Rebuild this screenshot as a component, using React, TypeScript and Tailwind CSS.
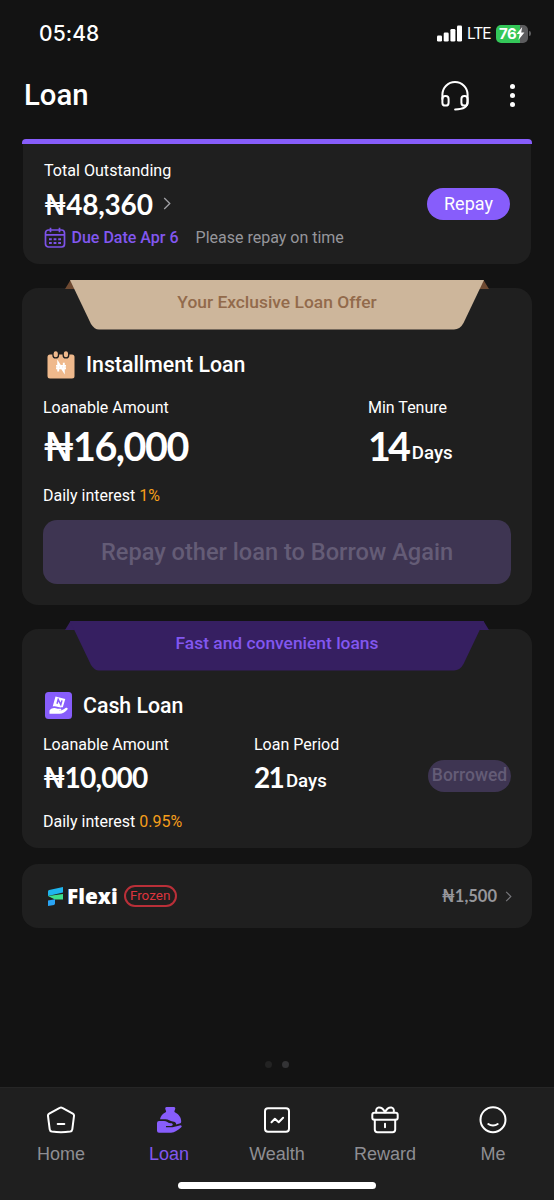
import type { ReactNode } from 'react';
import clsx from 'clsx';

function Chevron({ className }: { className?: string }) {
  return (
    <svg viewBox="0 0 8 14" fill="none" stroke="currentColor" strokeWidth="1.4" className={className}>
      <path d="M1 1l6 6-6 6" />
    </svg>
  );
}

function StatusBar() {
  return (
    <div className="flex h-[67px] items-center justify-between pl-[39px] pr-[23px]">
      <span className="font-['Inter'] text-[21px] font-medium leading-none tracking-[0.1px]">05:48</span>
      <div className="flex items-center">
        <svg viewBox="0 0 26 17" className="h-[17px] w-[26px]" fill="#fff">
          <rect x="0" y="10.5" width="5" height="6" rx="1.3" />
          <rect x="6.7" y="7.5" width="5" height="9" rx="1.3" />
          <rect x="13.4" y="4" width="5" height="12.5" rx="1.3" />
          <rect x="20" y="0.5" width="5" height="16" rx="1.3" />
        </svg>
        <span className="ml-1 w-[25px] font-['Inter'] text-[15.5px] leading-none tracking-[-1px]">LTE</span>
        <div className="relative ml-[4px] flex h-[18px] w-[32px] items-center overflow-hidden rounded-[5px] bg-gradient-to-r from-[#34c759] from-75% to-[#5c5c5e] to-75%">
          <span className="pl-[3px] font-['Inter'] text-[15px] font-bold leading-none tracking-[-0.6px]">76</span>
          <svg viewBox="0 0 9 13" className="h-[13px] w-[9px]" fill="#fff">
            <path d="M6.2 0L0.6 7h3.1L2.4 13 8.4 5.6H5.2z" />
          </svg>
        </div>
        <div className="ml-[1px] h-[5px] w-[2px] rounded-r-full bg-[#5c5c5e]" />
      </div>
    </div>
  );
}

function Header() {
  return (
    <header className="flex h-[57px] items-center justify-between pl-[24px] pr-[39px]">
      <h1 className="text-[29.3px] font-medium leading-none">Loan</h1>
      <div className="flex items-center">
        <svg viewBox="0 0 30 32" className="mr-[40px] h-[32px] w-[30px]" fill="none" stroke="#fff" strokeWidth="2" strokeLinecap="round">
          <path d="M2.4 19v-4.4a12.6 12.6 0 0125.2 0v7c0 5-4.500 7.900-12.500 7.900" />
          <rect x="2.400" y="16" width="6.200" height="9.600" rx="2.900" />
          <rect x="21.400" y="16" width="6.200" height="9.600" rx="2.900" />
        </svg>
        <div className="flex flex-col items-center gap-[4px]">
          <i className="size-[5px] rounded-full bg-white" />
          <i className="size-[5px] rounded-full bg-white" />
          <i className="size-[5px] rounded-full bg-white" />
        </div>
      </div>
    </header>
  );
}

function CalendarIcon() {
  return (
    <svg viewBox="0 0 22 22" className="size-[22px]" fill="none" stroke="#7c52e8" strokeWidth="1.7">
      <rect x="1.5" y="3" width="19" height="17" rx="3" />
      <path d="M1.5 7.800h19M6.500 0.800v4.400M15.500 0.800v4.400" />
      <path d="M5 12.200h2.800M9.600 12.200h2.800M14.200 12.200H17M5 16.100h2.800M9.600 16.100h2.800M14.200 16.100H17" strokeWidth="2" />
    </svg>
  );
}

function OutstandingCard() {
  return (
    <section className="mx-[22px] mt-[15px]">
      <div className="h-[5px] rounded-t-[4px] bg-[#875dfb]" />
      <div className="mx-[1px] flex h-[120px] items-center justify-between rounded-b-[16px] bg-[#1f1f1f] pl-[21px] pr-[21px]">
        <div>
          <p className="h-[32px] text-[16.1px] leading-[34px]">Total Outstanding</p>
          <p className="flex h-[36px] items-center pb-[1px] font-['Lato'] text-[28px] font-bold leading-none tracking-[-0.2px]">
            ₦48,360
            <Chevron className="ml-[10px] h-[13px] w-[8px] text-[#a0a0a4]" />
          </p>
          <p className="flex h-[32px] items-center text-[16px]">
            <CalendarIcon />
            <span className="ml-[5.5px] font-medium text-[#8257f0]">Due Date Apr 6</span>
            <span className="ml-[17px] text-[#96969b]">Please repay on time</span>
          </p>
        </div>
        <button className="h-[32px] w-[83px] rounded-full bg-[#875dfb] text-[18px] leading-none">Repay</button>
      </div>
    </section>
  );
}

function Ribbon({ fill, fold, textClass, children }: { fill: string; fold: string; textClass: string; children: ReactNode }) {
  return (
    <div className="relative -mt-2 flex h-[50px] items-center justify-center">
      <svg viewBox="0 0 424 50" className="absolute top-0 left-[43px] h-[50px] w-[424px]">
        <path d="M5.500 0L0 9h12V0zM418.500 0l5.500 9h-12V0z" fill={fold} />
        <path d="M5 0H419L398.500 43Q395 49.500 389 49.500H34Q29.500 49.500 26 44z" fill={fill} />
      </svg>
      <span className={clsx('relative -top-[2px] text-[17.4px] font-medium leading-none', textClass)}>{children}</span>
    </div>
  );
}

function InstallmentIcon() {
  return (
    <svg viewBox="0 0 28 29" className="mb-[1px] h-[29px] w-[28px]">
      <rect x="0.500" y="4.500" width="27" height="24" rx="2.500" fill="#efb98c" />
      <rect x="6" y="0.700" width="5.500" height="7.200" rx="2.700" fill="#efb98c" stroke="#1f1f1f" strokeWidth="1.300" />
      <rect x="16.200" y="0.700" width="5.500" height="7.200" rx="2.700" fill="#efb98c" stroke="#1f1f1f" strokeWidth="1.300" />
      <path d="M11.200 21.400v-8.600l5.600 8.600v-8.600M9 15.900h10M9 18.300h10" fill="none" stroke="#fff" strokeWidth="1.900" />
    </svg>
  );
}

function CashIcon() {
  return (
    <svg viewBox="0 0 27 27" className="size-[27px]">
      <rect width="27" height="27" rx="3.500" fill="#875dfb" />
      <path d="M10.500 4.500l9.800 2.500-2.500 8.200c-1.500 0-2 .4-3.500.1-2-.4-3-1.600-6.600-.9z" fill="#fff" />
      <path d="M12 11.800l1.200-4.200 2.600 5 1.200-4.200" fill="none" stroke="#875dfb" strokeWidth="1.500" />
      <path d="M4.500 18.500c2.500-3.200 5.500-2.900 8-1.700h3c1.100 0 1.200 1.500 0 1.700h-2.300c2.500.6 5.200-.8 7.300-2.500 1.600-1 3 .3 1.700 1.700-2.400 2.500-4.700 4-7.400 4H4.500z" fill="#fff" />
    </svg>
  );
}

function InstallmentCard() {
  return (
    <section className="mx-[22px] mt-[24px] h-[317px] rounded-[16px] bg-[#1f1f1f]">
      <Ribbon fill="#cdb69b" fold="#6d4931" textClass="text-[#926a4b]">Your Exclusive Loan Offer</Ribbon>
      <div className="px-[21px]">
        <div className="mt-[17px] flex h-[35px] items-center gap-[11px] pl-[4px]">
          <InstallmentIcon />
          <h2 className="text-[21.3px] font-medium leading-none">Installment Loan</h2>
        </div>
        <div className="mt-[15px] flex">
          <div className="w-[325px]">
            <p className="text-[16px] leading-[22px]">Loanable Amount</p>
            <p className="mt-[2px] h-[52px] font-['Lato'] text-[39.5px] font-bold leading-[50px] tracking-[-1.5px]">₦16,000</p>
          </div>
          <div>
            <p className="text-[16px] leading-[22px]">Min Tenure</p>
            <p className="mt-[2px] flex h-[50px] items-center">
              <span className="font-['Lato'] text-[39.5px] font-bold leading-[50px] tracking-[-3px]">14</span>
              <span className="mt-[15px] ml-[4px] text-[18.700px] font-medium leading-none">Days</span>
            </p>
          </div>
        </div>
        <p className="mt-[11px] text-[16px] leading-[24px]">Daily interest <span className="text-[#f59e1b]">1%</span></p>
        <button className="mt-[12px] h-[64px] w-full rounded-[14px] bg-[#3e3552] pt-[2px] text-[23.6px] font-medium text-[#645c76]">
          Repay other loan to Borrow Again
        </button>
      </div>
    </section>
  );
}

function CashCard() {
  return (
    <section className="mx-[22px] mt-[24px] h-[219px] rounded-[16px] bg-[#1f1f1f]">
      <Ribbon fill="#361f61" fold="#361f61" textClass="text-[#8257f0]">Fast and convenient loans</Ribbon>
      <div className="px-[21px]">
        <div className="mt-[17px] flex h-[35px] items-center gap-[11px] pl-[2px]">
          <CashIcon />
          <h2 className="text-[21.3px] font-medium leading-none">Cash Loan</h2>
        </div>
        <div className="mt-[11px] flex">
          <div className="w-[211px]">
            <p className="text-[16px] leading-[22px]">Loanable Amount</p>
            <p className="mt-[3px] h-[37px] font-['Lato'] text-[28px] font-bold leading-[36px] tracking-[-0.800px]">₦10,000</p>
          </div>
          <div className="w-[174px]">
            <p className="text-[16px] leading-[22px]">Loan Period</p>
            <p className="mt-[3px] flex h-[36px] items-center">
              <span className="font-['Lato'] text-[28px] font-bold leading-[36px] tracking-[-1.800px]">21</span>
              <span className="mt-[9px] ml-[3px] text-[18.700px] font-medium leading-none">Days</span>
            </p>
          </div>
          <button className="mt-[26px] h-[32px] w-[83px] rounded-full bg-[#3e3552] text-[17.500px] font-medium leading-none text-[#645c76]">Borrowed</button>
        </div>
        <p className="mt-[14px] text-[16px] leading-[24px]">Daily interest <span className="text-[#f59e1b]">0.95%</span></p>
      </div>
    </section>
  );
}

function FlexiCard() {
  return (
    <section className="mx-[22px] mt-[16px] flex h-[64px] items-center rounded-[16px] bg-[#1f1f1f] pl-[26px] pr-[20px]">
      <svg viewBox="0 0 15 19" className="h-[19px] w-[15px]">
        <path d="M0 4.500Q0 3.300 1.200 3L15 0v5.500L0 9z" fill="#1fb5ee" />
        <path d="M0 9l15-2v5.500H7z" fill="#3fe08b" />
        <path d="M0 13.500l7-1.200v4.300Q7 17.600 6 17.900L0 19z" fill="#2aa5f5" />
      </svg>
      <span className="ml-[4px] font-['Open_Sans'] text-[20.800px] font-extrabold leading-none">Flexi</span>
      <span className="ml-[6px] flex h-[22px] w-[53px] items-center justify-center rounded-full border-2 border-[#b92f38] text-[13.500px] leading-none text-[#dc343e]">Frozen</span>
      <span className="ml-auto font-['Lato'] text-[16.500px] font-bold leading-none text-[#96969b]">₦1,500</span>
      <Chevron className="ml-[8px] h-[11px] w-[7px] text-[#77777b]" />
    </section>
  );
}

const tabs: { label: string; icon: ReactNode }[] = [
  {
    label: 'Home',
    icon: (
      <>
        <path d="M12.700 1.800Q14 1 15.300 1.800L25.800 7.600Q27.200 8.400 27 10L25.300 23.300Q25 25.300 23.100 25.600Q14 26.800 4.900 25.600Q3 25.300 2.700 23.300L1 10Q.8 8.400 2.200 7.600z" />
        <path d="M10.700 18h6.600" />
      </>
    ),
  },
  {
    label: 'Loan',
    icon: (
      <g fill="currentColor" stroke="none">
        <path d="M11.500 1h7.500q1.500 .2 1.300 1.700l-.9 2.600q-.1 .9.800 1.300c3.600 1.800 6 5 6 8.800q0 1.500-.8 1.900l-4.200 1.200c0-2.300-1.500-3.100-3.500-3.100-2.500-.2-4.300-2.200-7.300-2.200H5C5.500 10.200 8 7.600 10.300 6.600q.9-.4.800-1.300l-.9-2.600Q10 1.200 11.500 1z" />
        <path d="M4 15h5c2.500 0 4 2.200 7 2.300 2.300 0 2.400 2.700 0 2.700h-5v1.300h6.500l7.200-1.900c2-.3 2.700 1.300 1.300 2.200C22.500 24.300 20 26.700 16 26.700H4Q2 26.700 2 24.700V17q0-2 2-2z" />
      </g>
    ),
  },
  {
    label: 'Wealth',
    icon: (
      <>
        <rect x="2" y="2.200" width="24" height="23.600" rx="3" />
        <path d="M8.500 16.200l3.400-3.400 3.800 3.400 4.400-4.400" />
      </>
    ),
  },
  {
    label: 'Reward',
    icon: (
      <>
        <rect x="1.300" y="6.700" width="25.400" height="7" rx="2" />
        <path d="M3.800 13.700v9.800q0 2.700 2.700 2.700h15q2.700 0 2.700-2.700v-9.800M14 17.800v3.500M5.300 6.300c-.6-2.300.2-4.500 2.400-4.800 2.800-.2 4.800 1.500 6.300 4.800 1.500-3.300 3.500-5 6.300-4.800 2.200.3 3 2.500 2.400 4.800" />
      </>
    ),
  },
  {
    label: 'Me',
    icon: (
      <>
        <circle cx="14" cy="13.700" r="12.500" />
        <path d="M9.300 18c2.600 2 6.800 2 9.400 0" />
      </>
    ),
  },
];

function TabBar() {
  return (
    <nav className="mt-auto h-[113px] border-t border-[#262626] bg-[#1f1f1f] px-[7px]">
      <div className="grid grid-cols-5 pt-[18px]">
        {tabs.map(tab => (
          <div key={tab.label} className="flex flex-col items-center">
            <svg
              viewBox="0 0 28 28"
              className={clsx('size-[28px]', tab.label === 'Loan' ? 'text-[#875dfb]' : 'text-white')}
              fill="none"
              stroke="currentColor"
              strokeWidth="2"
              strokeLinecap="round"
              strokeLinejoin="round"
            >
              {tab.icon}
            </svg>
            <span
              className={clsx(
                "mt-[8px] font-['Liberation_Sans',sans-serif] text-[18px] leading-[24px]",
                tab.label === 'Loan' ? 'text-[#8257f0]' : 'text-[#8e8e93]'
              )}
            >
              {tab.label}
            </span>
          </div>
        ))}
      </div>
      <div className="mx-auto mt-[16px] h-[7px] w-[198px] rounded-full bg-white" />
    </nav>
  );
}

export default function App() {
  return (
    <div className="flex h-[1200px] w-[554px] flex-col overflow-hidden bg-[#131313] font-['Roboto',sans-serif] text-white">
      <StatusBar />
      <Header />
      <OutstandingCard />
      <InstallmentCard />
      <CashCard />
      <FlexiCard />
      <div className="mt-[133px] flex justify-center gap-[10px]">
        <i className="size-[7px] rounded-full bg-[#232323]" />
        <i className="size-[7px] rounded-full bg-[#333335]" />
      </div>
      <TabBar />
    </div>
  );
}
